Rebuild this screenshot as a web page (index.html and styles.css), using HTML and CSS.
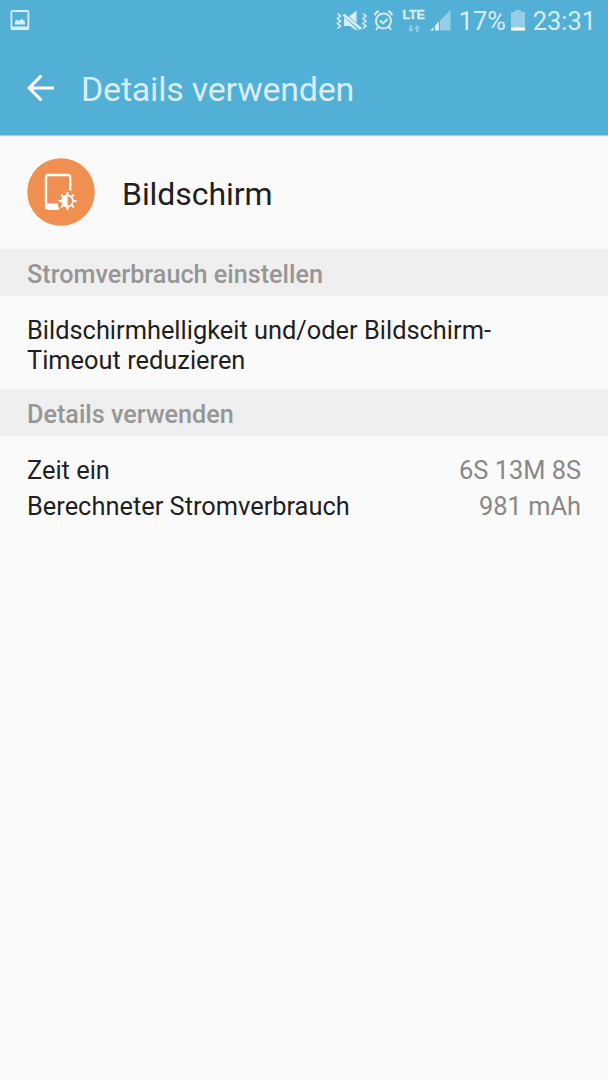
FILE: index.html
```html
<!DOCTYPE html>
<html lang="de">
<head>
  <meta charset="UTF-8" />
  <meta name="viewport" content="width=device-width, initial-scale=1.0"/>
  <title>Details verwenden</title>
  <link rel="stylesheet" href="styles.css">
</head>
<body>
  <header class="header">
    <div class="status-bar">
      <svg class="icon-image" width="20" height="21" viewBox="0 0 20 21">
        <rect x="1.4" y="1" width="17" height="18" rx="1" fill="none" stroke="currentColor" stroke-width="1.8"/>
        <path d="M1 16.500h17.500v3H1zM5 14.500v-3l2-2 2 1.500 3-2.500 1 1.500 2 1.500v3z" fill="currentColor"/>
      </svg>

      <div class="status-right">
        <svg class="icon-mute" width="32" height="22" viewBox="0 0 32 22">
          <path d="M13 6.500l7.500-6V13zM8 7l14 13h-2.500L14 16H8z" fill="currentColor"/>
          <path d="M7.500 4.500L25 19" stroke="currentColor" stroke-width="2.800"/>
          <path d="M1.500 3.500l3 2.500-3 2.500 3 2.500-3 2.500 3 2.500-3 2.500M27 3.500l3 2.500-3 2.500 3 2.500-3 2.500 3 2.500-3 2.500" fill="none" stroke="currentColor" stroke-width="1.600"/>
        </svg>
        <svg class="icon-alarm" width="20" height="22" viewBox="0 0 20 22">
          <g fill="none" stroke="currentColor" stroke-width="1.900">
            <circle cx="9.500" cy="11" r="7.500"/>
            <path d="M.9 5.200C1.500 3 3 1.700 5 1.300M18.100 5.200C17.500 3 16 1.700 14 1.300M4 17l-2 3M15 17l2 3M6 10.500l3 3 4.500-4.500"/>
          </g>
        </svg>
        <div class="network">
          <span class="lte">LTE</span>
          <svg width="12" height="7" viewBox="0 0 12 7">
            <path d="M1.800 0h2v3.500H6L3 7 0 3.500h1.800zM8.200 7h2V3.500H12L9 0 6 3.500h2.200z" fill="currentColor"/>
          </svg>
        </div>
        <svg class="icon-signal" width="21" height="21" viewBox="0 0 21 21">
          <path d="M20.500 0v20.500H10V10.500z" fill="currentColor" opacity=".5"/>
          <path d="M0 20.500l3.500-3.500v3.500zM5 20.500v-5l4-4v9z" fill="currentColor"/>
        </svg>
        <span class="percent">17%</span>
        <svg class="icon-battery" width="14" height="21" viewBox="0 0 14 21">
          <path d="M4 0h6v2h4v18.500H0V2h4z" fill="currentColor" opacity=".5"/>
          <path d="M0 17.500h14v3H0z" fill="#fff"/>
        </svg>
        <span class="clock">23:31</span>
      </div>
    </div>

    <div class="title-bar">
      <svg class="icon-back" width="28" height="28" viewBox="0 0 28 28">
        <path d="M27 14H2M14.500 1.500L2.200 14l12.300 12.500" fill="none" stroke="#fff" stroke-width="3.200"/>
      </svg>
      <h1>Details verwenden</h1>
    </div>
  </header>

  <main>
    <div class="app-row">
      <svg class="app-icon" width="68" height="68" viewBox="0 0 68 68">
        <circle cx="34" cy="34" r="33.800" fill="#f09050"/>
        <path d="M43.200 32.500V19.500q0-2.500-2.500-2.500H21.500q-2.500 0-2.500 2.500v29q0 2 2.500 2h9" fill="none" stroke="#fff" stroke-width="2.400"/>
        <path d="M19 45.500h11.500q.5 3.800 2.500 6.100H21q-2 0-2-2z" fill="#fff"/>
        <circle cx="40.500" cy="43" r="5.500" fill="none" stroke="#fff" stroke-width="1.800"/>
        <path d="M40.500 37.500v11a5.500 5.500 0 0 1 0-11z" fill="#fff"/>
        <path d="M40.500 34v3.500M40.500 48.500v3.500M31.500 43H35M46 43h3.500M34.100 36.600l2.500 2.500M44.400 46.900l2.500 2.500M34.100 49.400l2.500-2.500M44.400 39.100l2.500-2.500" stroke="#fff" stroke-width="2"/>
      </svg>
      <h2>Bildschirm</h2>
    </div>

    <h3 class="section-title">Stromverbrauch einstellen</h3>
    <p class="hint">Bildschirmhelligkeit und/oder Bildschirm-<br>Timeout reduzieren</p>

    <h3 class="section-title">Details verwenden</h3>
    <div class="details">
      <div class="detail-row">
        <span>Zeit ein</span>
        <span class="value">6S 13M 8S</span>
      </div>
      <div class="detail-row">
        <span>Berechneter Stromverbrauch</span>
        <span class="value">981 mAh</span>
      </div>
    </div>
  </main>
</body>
</html>
```
FILE: styles.css
```css
body {
  margin: 0;
  min-height: 1080px;
  font-family: Roboto, sans-serif;
  font-size: 25.4px;
  background-color: #fafafa;
  color: #1f1f1f;
}
h1, h2, h3, p {
  margin: 0;
  font-weight: 400;
}
svg {
  display: block;
  flex-shrink: 0;
}
.header {
  height: 135px;
  background-color: #52afd5;
  color: #d8edf6;
  box-shadow: 0 1px 1px rgba(0,0,0,0.2);
}
/* status bar */
.status-bar {
  display: flex;
  justify-content: space-between;
  align-items: center;
  height: 41px;
  padding: 0 12px 0 10px;
  box-sizing: border-box;
}
.status-right {
  display: flex;
  align-items: center;
  line-height: 41px;
}
.icon-alarm {
  margin-left: 6px;
}
.network {
  display: flex;
  flex-direction: column;
  align-items: center;
  width: 22px;
  margin-left: 9px;
}
.network svg {
  margin-top: 3px;
  opacity: 0.5;
}
.lte {
  font-family: "Liberation Sans", sans-serif;
  font-size: 12.5px;
  font-weight: 700;
  letter-spacing: -0.2px;
  line-height: 13px;
  -webkit-text-stroke: 0.3px currentColor;
}
.icon-signal {
  margin-left: 5px;
}
.percent {
  margin-left: 8px;
  padding-top: 2px;
}
.icon-battery {
  margin-left: 5px;
}
.clock {
  margin-left: 8px;
  padding-top: 2px;
}
/* title */
.title-bar {
  display: flex;
  align-items: center;
  height: 94px;
  padding-left: 27px;
}
h1 {
  margin-left: 26px;
  padding-top: 2px;
  font-size: 34px;
  letter-spacing: -0.22px;
}
/* app name */
.app-row {
  display: flex;
  align-items: center;
  height: 114px;
  padding-left: 27px;
}
h2 {
  margin-left: 27px;
  padding-top: 4px;
  font-size: 32px;
  letter-spacing: -0.05px;
}
.section-title {
  height: 47px;
  padding-left: 27px;
  background-color: #efefef;
  color: #969696;
  font-size: 25.2px;
  font-weight: 500;
  line-height: 51px;
}
.hint {
  padding: 19px 27px 14px;
  line-height: 30px;
}
.details {
  padding: 16px 27px;
}
.detail-row {
  display: flex;
  justify-content: space-between;
  line-height: 36px;
}
.value {
  color: #888;
}
```
